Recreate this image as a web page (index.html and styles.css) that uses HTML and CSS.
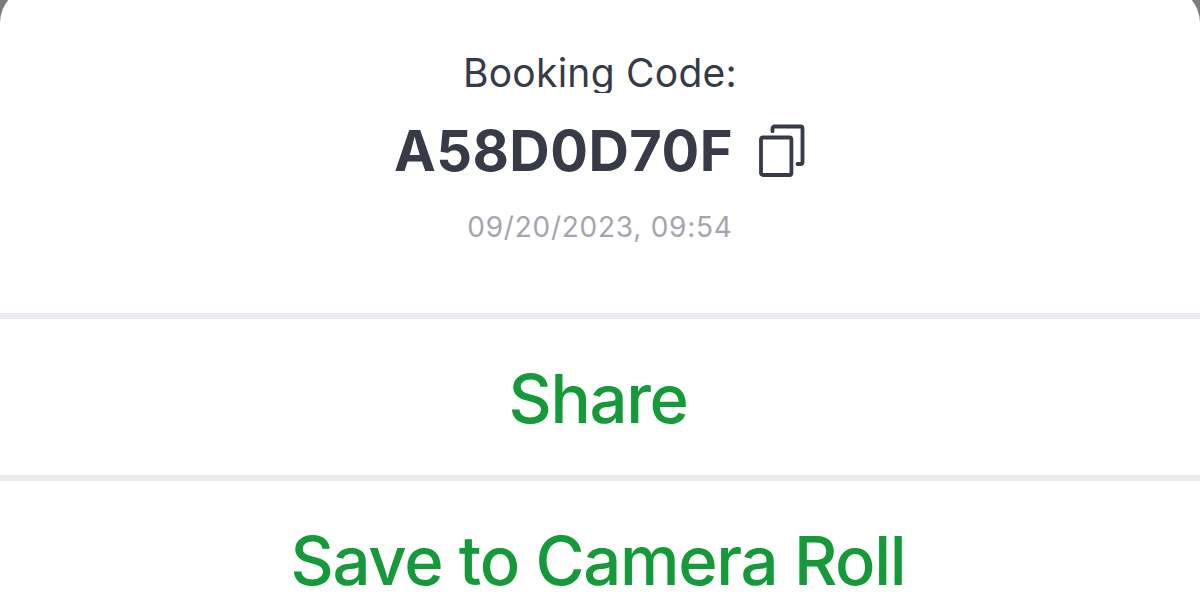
FILE: index.html
```html
<!DOCTYPE html>
<html lang="en">
<head>
  <meta charset="UTF-8" />
  <meta name="viewport" content="width=device-width, initial-scale=1.0"/>
  <title>Booking Code</title>
  <link rel="stylesheet" href="styles.css">
</head>
<body>
  <div class="sheet">
    <div class="booking">
      <p class="label">Booking Code:</p>
      <div class="code-row">
        <span class="code">A58D0D70F</span>
        <button class="copy" aria-label="Copy">
          <svg width="48" height="54" viewBox="0 0 48 54" fill="none" stroke="#363b47" stroke-width="3.8" stroke-linecap="round" stroke-linejoin="round">
            <rect x="3" y="13.5" width="30.4" height="37.5" rx="2"/>
            <path d="M14.5 7.2V4.5a2 2 0 0 1 2-2H42.5a2 2 0 0 1 2 2V38a2 2 0 0 1-2 2H39.5"/>
          </svg>
        </button>
      </div>
      <p class="date">09/20/2023, 09:54</p>
    </div>
    <button class="action share">Share</button>
    <button class="action save">Save to Camera Roll</button>
  </div>
</body>
</html>
```
FILE: styles.css
```css
* {
  margin: 0;
  padding: 0;
  box-sizing: border-box;
  font-family: Inter, 'Liberation Sans', sans-serif;
}

body {
  background: #7c7c7c;
  height: 100vh;
  overflow: hidden;
}

button {
  border: none;
  background: none;
  cursor: pointer;
}

.sheet {
  background: #fff;
  margin-top: -13px;
  border-radius: 36px 36px 0 0;
  overflow: hidden;
}

.booking {
  height: 326px;
  padding-top: 66px;
  display: flex;
  flex-direction: column;
  align-items: center;
}

.label {
  height: 40px;
  line-height: 40px;
  font-size: 39px;
  letter-spacing: 0.25px;
  color: #363b47;
  overflow: hidden;
}

.code-row {
  display: flex;
  align-items: center;
  gap: 25px;
  height: 60px;
  margin-top: 28px;
}

.code {
  font-size: 56px;
  font-weight: 700;
  line-height: 60px;
  letter-spacing: 0.45px;
  color: #363b47;
}

.copy {
  display: flex;
}

.date {
  margin-top: 26px;
  font-size: 28px;
  line-height: 40px;
  letter-spacing: 0.75px;
  color: #a4a5ad;
}

.action {
  display: block;
  width: 100%;
  height: 162px;
  padding: 4px 4px 0 0;
  border-top: 6px solid #ebebef;
  font-size: 67px;
  font-weight: 500;
  line-height: 152px;
  letter-spacing: -1.3px;
  color: #149a38;
}
```
